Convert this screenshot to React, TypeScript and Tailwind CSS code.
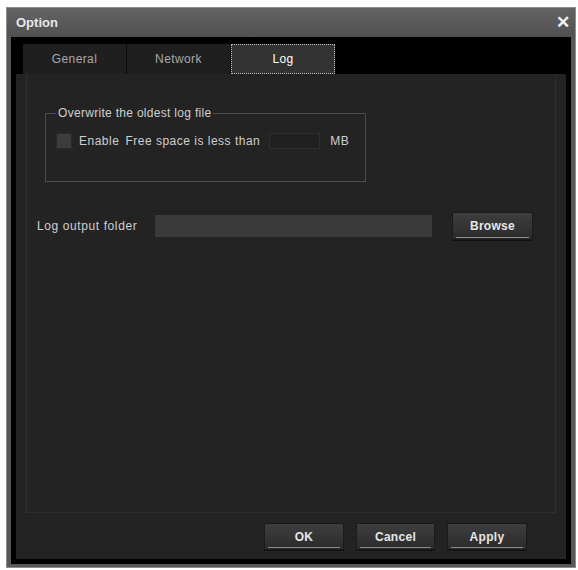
import React from 'react';

const font = { fontFamily: '"Liberation Sans", Arial, sans-serif' };

function DlgButton({ label, className = '' }: { label: string; className?: string }) {
  return (
    <button
      className={`relative flex items-center justify-center bg-gradient-to-b from-[#3e3e3e] to-[#2b2b2b] border border-[#1a1a1a] text-[12px] font-bold tracking-[0.3px] text-[#e6e6e6] shadow-[0_1px_0_#111] ${className}`}
    >
      {label}
      <span className="absolute left-[3px] right-[3px] bottom-[1px] h-px bg-[#8a8a8a]" />
    </button>
  );
}

export default function App() {
  const tabs = ['General', 'Network', 'Log'];

  return (
    <div className="w-[578px] h-[570px] bg-white pt-[7px] pl-[6px]" style={font}>
      <div className="w-[570px] h-[561px] bg-[#575757] border border-[#8c8c8c] flex flex-col px-[4px] pb-[3px]">
        {/* Title bar */}
        <div className="h-[29px] flex items-center justify-between -mx-[4px] pl-[9px] pr-[5px] bg-gradient-to-b from-[#646464] to-[#505050]">
          <span className="text-[13px] font-bold text-[#e8e8e8]">Option</span>
          <span className="text-[17px] font-bold text-[#f0f0f0] leading-none">✕</span>
        </div>

        {/* Body */}
        <div className="flex-1 bg-black flex flex-col px-[5px] pb-[5px]">
          {/* Tab strip */}
          <div className="h-[37px] flex items-end pl-[7px]">
            {tabs.map((t) => (
              <div
                key={t}
                className={
                  t === 'Log'
                    ? 'w-[104px] h-[30px] flex items-center justify-center bg-[#333333] border border-dotted border-[#bdbdbd] text-[12px] tracking-[0.4px] text-white'
                    : 'w-[104px] h-[30px] flex items-center justify-center bg-[#1f1f1f] border-r border-[#0a0a0a] text-[12px] tracking-[0.4px] text-[#a8a8a8]'
                }
              >
                {t}
              </div>
            ))}
          </div>

          {/* Main area */}
          <div className="flex-1 bg-[#232323] flex flex-col px-[10px]">
            <div className="h-[439px] border-x border-b border-[#2e2e2e] flex flex-col">
              <fieldset className="mt-[32px] ml-[18px] w-[321px] h-[76px] border border-[#4c4c4c] px-[10px]">
                <legend className="px-[2px] text-[12px] leading-[14px] tracking-[0.3px] text-[#d0d0d0]">
                  Overwrite the oldest log file
                </legend>
                <div className="flex items-center mt-[12px] text-[12px] tracking-[0.5px] text-[#cfcfcf]">
                  <div className="w-[16px] h-[16px] bg-[#3c3c3c] border border-[#2a2a2a]" />
                  <span className="ml-[7px]">Enable</span>
                  <span className="ml-[6px]">Free space is less than</span>
                  <div className="ml-[9px] w-[51px] h-[16px] bg-[#202020] border border-[#2f2f2f]" />
                  <span className="ml-[10px]">MB</span>
                </div>
              </fieldset>

              <div className="flex items-center mt-[30px] ml-[10px]">
                <span className="w-[118px] text-[12px] tracking-[0.6px] text-[#d0d0d0]">Log output folder</span>
                <div className="w-[277px] h-[22px] bg-[#3a3a3a]" />
                <DlgButton label="Browse" className="ml-[20px] w-[81px] h-[28px]" />
              </div>
            </div>

            <div className="flex justify-end gap-[12px] pt-[10px] pr-[29px]">
              <DlgButton label="OK" className="w-[80px] h-[27px]" />
              <DlgButton label="Cancel" className="w-[79px] h-[27px]" />
              <DlgButton label="Apply" className="w-[80px] h-[27px]" />
            </div>
          </div>
        </div>
      </div>
    </div>
  );
}
